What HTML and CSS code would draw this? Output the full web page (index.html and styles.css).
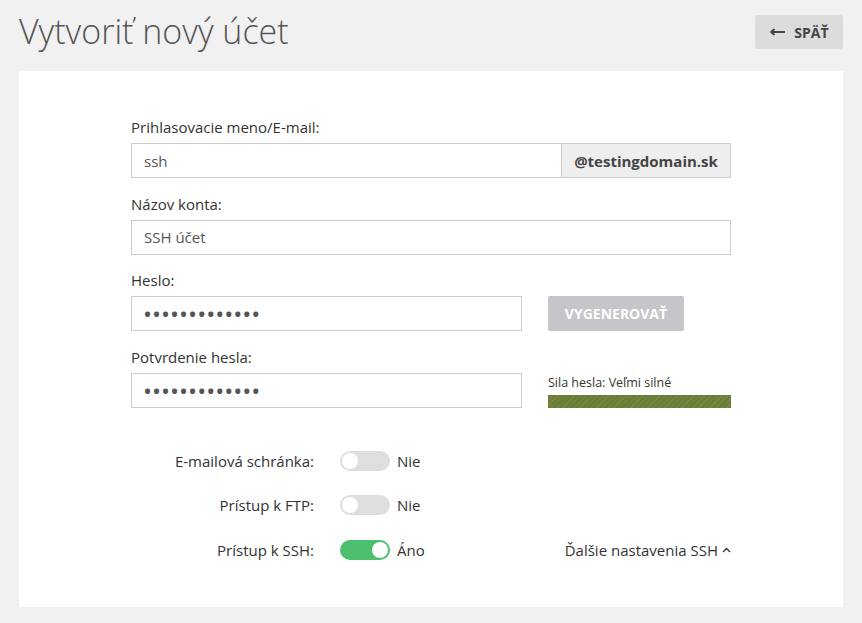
FILE: index.html
```html
<!DOCTYPE html>
<html lang="sk">
<head>
<meta charset="utf-8">
<title>Vytvoriť nový účet</title>
<link rel="stylesheet" href="styles.css">
</head>
<body>
<header class="page-head">
  <h1 class="page-title">Vytvoriť nový účet</h1>
  <a class="btn-back" href="#">
    <svg class="back-arrow" width="15" height="8" viewBox="0 0 15 8"><path d="M15 4H2M4.5 1L1.2 4L4.5 7" fill="none" stroke="#444" stroke-width="1.8"/></svg>
    <span>SPÄŤ</span>
  </a>
</header>
<main class="card">
  <form class="form">
    <div class="group">
      <label class="label">Prihlasovacie meno/E-mail:</label>
      <div class="input-wrap">
        <input class="input input-flex" type="text" value="ssh">
        <span class="addon">@testingdomain.sk</span>
      </div>
    </div>
    <div class="group">
      <label class="label">Názov konta:</label>
      <input class="input" type="text" value="SSH účet">
    </div>
    <div class="group">
      <label class="label">Heslo:</label>
      <div class="pw-row">
        <input class="input input-pw" type="password" value="abcdefghijklm">
        <button type="button" class="btn-gen">VYGENEROVAŤ</button>
      </div>
    </div>
    <div class="group">
      <label class="label">Potvrdenie hesla:</label>
      <div class="pw-row">
        <input class="input input-pw" type="password" value="abcdefghijklm">
        <div class="strength">
          <div class="strength-text">Sila hesla: Veľmi silné</div>
          <div class="strength-bar"></div>
        </div>
      </div>
    </div>
    <div class="switches">
      <div class="switch-row">
        <span class="switch-label">E-mailová schránka:</span>
        <span class="toggle"><span class="knob"></span></span>
        <span class="switch-state">Nie</span>
      </div>
      <div class="switch-row">
        <span class="switch-label">Prístup k FTP:</span>
        <span class="toggle"><span class="knob"></span></span>
        <span class="switch-state">Nie</span>
      </div>
      <div class="switch-row">
        <span class="switch-label">Prístup k SSH:</span>
        <span class="toggle toggle-on"><span class="knob"></span></span>
        <span class="switch-state">Áno</span>
        <a class="more" href="#">Ďalšie nastavenia SSH <svg class="caret" width="9" height="6" viewBox="0 0 9 6"><path d="M1 5L4.5 1.5L8 5" fill="none" stroke="#333" stroke-width="1.3"/></svg></a>
      </div>
    </div>
  </form>
</main>
</body>
</html>
```

FILE: styles.css
```css
* { box-sizing: border-box; }
html, body {
  margin: 0;
  padding: 0;
  background: #f1f1f1;
  font-family: "Open Sans", "Noto Sans", sans-serif;
  color: #333;
}
.page-head {
  display: flex;
  justify-content: space-between;
  align-items: flex-start;
  height: 71px;
  padding: 11px 19px 0 19px;
}
.page-title {
  margin: 0;
  font-size: 34px;
  line-height: 41px;
  font-weight: 300;
  color: #555;
}
.btn-back {
  margin-top: 4px;
  width: 88px;
  height: 34px;
  background: #dcdcdc;
  border-radius: 3px;
  display: flex;
  align-items: center;
  justify-content: center;
  gap: 9px;
  text-decoration: none;
  color: #444;
  font-weight: 700;
  font-size: 14px;
  padding-left: 1px;
}
.back-arrow { display: block; }
.card {
  margin: 0 19px;
  height: 536px;
  background: #fff;
  padding-top: 46px;
}
.form {
  width: 600px;
  margin: 0 auto;
}
.group { margin-bottom: 15.5px; }
.label {
  display: block;
  font-size: 15px;
  line-height: 20px;
  margin-bottom: 6px;
  color: #333;
}
.input {
  display: block;
  width: 100%;
  height: 35px;
  border: 1px solid #ccc;
  background: #fff;
  padding: 0 12px;
  font-family: "Open Sans", sans-serif;
  font-size: 15px;
  color: #555;
  outline: none;
  margin: 0;
}
.input-wrap {
  display: flex;
  height: 35px;
}
.input-flex { flex: 1; width: auto; border-right: none; }
.addon {
  width: 170px;
  display: flex;
  align-items: center;
  justify-content: center;
  background: #eee;
  border: 1px solid #ccc;
  font-weight: 700;
  font-size: 15px;
  color: #444;
}
.pw-row {
  display: flex;
  align-items: flex-end;
  gap: 26px;
}
.input-pw {
  width: 391px;
  font-size: 24px;
  letter-spacing: 0;
  padding-left: 11px;
  color: #555;
}
.btn-gen {
  width: 136px;
  height: 35px;
  border: none;
  border-radius: 2px;
  background: #c4c6c9;
  color: #fff;
  font-family: "Open Sans", sans-serif;
  font-weight: 700;
  font-size: 14px;
  padding: 0;
}
.strength {
  flex: 1;
  display: flex;
  flex-direction: column;
}
.strength-text {
  font-size: 12.5px;
  line-height: 17px;
  color: #333;
  margin-bottom: 4px;
}
.strength-bar {
  height: 13px;
  background: repeating-linear-gradient(135deg, #6a7e39 0, #6a7e39 3px, #75893f 3px, #75893f 4px);
}
.switches {
  margin-top: 43px;
  display: flex;
  flex-direction: column;
  gap: 24.5px;
}
.switch-row {
  display: flex;
  align-items: center;
  height: 20px;
}
.switch-label {
  width: 183px;
  text-align: right;
  font-size: 15px;
  color: #333;
  margin-right: 26px;
}
.toggle {
  width: 50px;
  height: 20px;
  border-radius: 10px;
  background: #dedede;
  position: relative;
  display: flex;
  align-items: center;
  padding: 0 2px;
  justify-content: flex-start;
}
.toggle-on {
  background: #4dbf6f;
  justify-content: flex-end;
}
.knob {
  width: 16px;
  height: 16px;
  border-radius: 50%;
  background: #fff;
}
.switch-state {
  margin-left: 7px;
  font-size: 15px;
  color: #333;
}
.more {
  margin-left: auto;
  font-size: 15px;
  color: #333;
  text-decoration: none;
  display: flex;
  align-items: center;
  gap: 4px;
}
.caret { display: block; }
```
